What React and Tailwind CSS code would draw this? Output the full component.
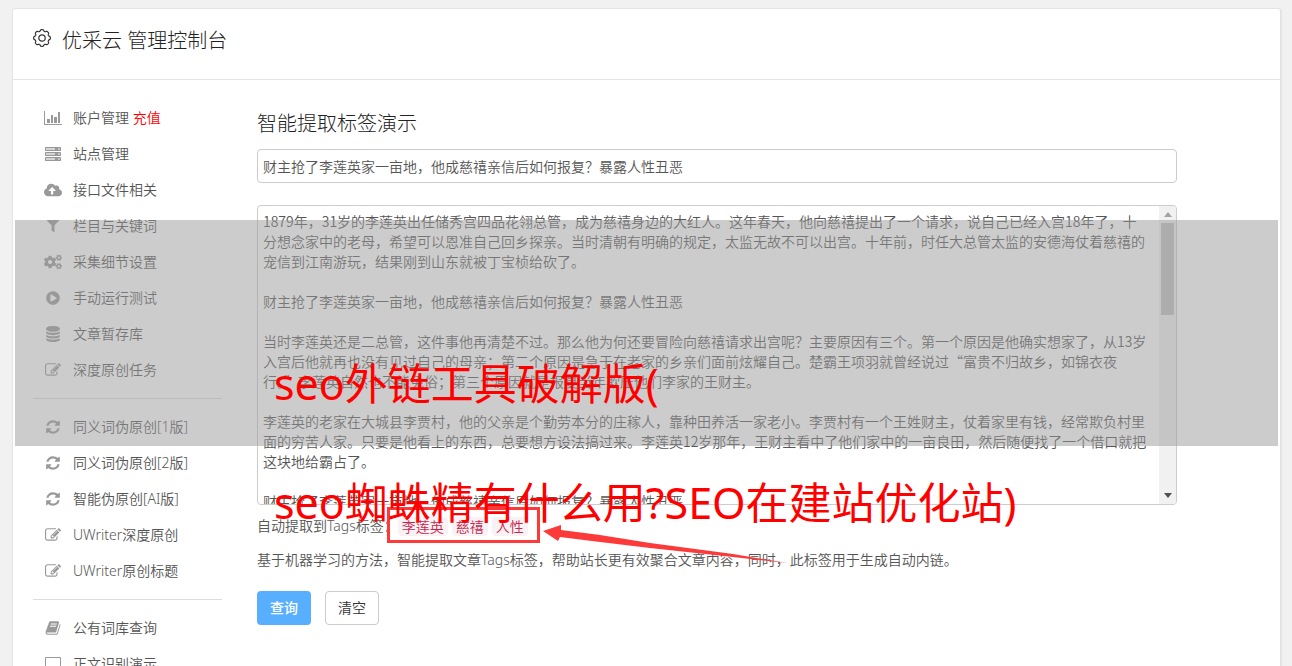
import { FaCloudUploadAlt, FaFilter, FaCogs, FaPlayCircle } from "react-icons/fa";

const Svg = ({ children, box = "0 0 18 16" }) => (
  <svg viewBox={box} className="h-4 w-[18px]" fill="currentColor" aria-hidden="true">{children}</svg>
);

const Bars = () => (
  <Svg>
    <path d="M0 1h1v13h17v1H0z" />
    <path d="M3 9h3v4H3zM7 5h2v8H7zM10 7h3v6h-3zM14 2h2v11h-2z" />
  </Svg>
);
const Server = () => (
  <Svg>
    {[2, 7, 12].map((y) => (
      <g key={y}>
        <rect x="1" y={y - 1} width="16" height="4" rx="0.4" />
        <rect x="2" y={y} width="9" height="2" fill="#d4d4d4" />
        <rect x="14" y={y} width="2" height="2" fill="#c4c4c4" />
      </g>
    ))}
  </Svg>
);
const Cloud = () => <FaCloudUploadAlt className="h-4 w-[18px]" />;
const Filter = () => <FaFilter className="h-3.5 w-3" />;
const Cogs = () => <FaCogs className="h-4 w-[18px]" />;
const Play = () => <FaPlayCircle className="size-3.5" />;
const Db = () => (
  <Svg box="0 0 1536 1792">
    <path d="M768 768q237 0 443-43t325-127v170q0 69-103 128t-280 93.500-385 34.500-385-34.500T103 896 0 768V598q119 84 325 127t443 43zm0 768q237 0 443-43t325-127v170q0 69-103 128t-280 93.500-385 34.500-385-34.500-280-93.500T0 1536v-170q119 84 325 127t443 43zm0-384q237 0 443-43t325-127v170q0 69-103 128t-280 93.500-385 34.500-385-34.500-280-93.500T0 1152V982q119 84 325 127t443 43zM768 0q208 0 385 34.500t280 93.500 103 128v128q0 69-103 128t-280 93.500T768 640t-385-34.500T103 512 0 384V256q0-69 103-128t280-93.500T768 0z" />
  </Svg>
);
const Edit = () => (
  <Svg box="0 0 1792 1792">
    <path d="M888 1184l116-116-152-152-116 116v56h96v96h56zm440-720q-16-16-33 1L945 815q-17 17-1 33t33-1l350-350q17-17 1-33zm80 594v190q0 119-84.500 203.500T1120 1536H288q-119 0-203.500-84.500T0 1248V416q0-119 84.500-203.500T288 128h832q63 0 117 25 15 7 18 23 3 17-9 29l-49 49q-14 14-32 8-23-6-45-6H288q-66 0-113 47t-47 113v832q0 66 47 113t113 47h832q66 0 113-47t47-113v-126q0-13 9-22l64-64q15-15 35-7t20 29zm-96-738l288 288-672 672H640V992zm444 132l-92 92-288-288 92-92q28-28 68-28t68 28l152 152q28 28 28 68t-28 68z" />
  </Svg>
);
const Refresh = () => (
  <Svg box="0 0 1536 1792">
    <path d="M1511 1056q0 5-1 7-64 268-268 434.500T764 1664q-146 0-282.500-55T238 1452l-129 129q-19 19-45 19t-45-19-19-45v-448q0-26 19-45t45-19h448q26 0 45 19t19 45-19 45l-137 137q71 66 161 102t187 36q134 0 250-65t186-179q11-17 53-117 8-23 30-23h192q13 0 22.500 9.500t9.500 22.500zm25-800v448q0 26-19 45t-45 19h-448q-26 0-45-19t-19-45 19-45l138-138Q969 384 768 384q-134 0-250 65T332 628q-11 17-53 117-8 23-30 23H50q-13 0-22.500-9.500T18 736v-7q65-268 270-434.500T768 128q146 0 284 55.500T1297 340l130-129q19-19 45-19t45 19 19 45z" />
  </Svg>
);
const Book = () => (
  <Svg box="0 0 1664 1792">
    <path d="M1639 478q40 57 18 129l-275 906q-19 64-76.500 107.500T1183 1664H260q-77 0-148.500-53.500T12 1479q-24-67-2-127 0-4 3-27t4-37q1-8-3-21.500t-3-19.500q2-11 8-21t16.500-23.500T52 1179q23-38 45-91.500t30-91.500q3-10 .5-30t-.5-28q3-11 17-28t17-23q21-36 42-92t25-90q1-9-2.500-32t.5-28q4-13 22-30.500t22-22.500q19-26 42.500-84.500T340 411q1-8-3-25.500t-2-26.500q2-8 9-18t18-23 17-21q8-12 16.500-30.500t15-35 16-36 19.500-32 26.500-23.500 36-11.500T556 133l-1 3q38-9 51-9h761q74 0 114 56t18 130l-274 906q-36 119-71.500 153.500T1025 1407H156q-27 0-38 15-11 16-1 43 24 70 144 70h923q29 0 56-15.500t35-41.500l300-987q7-22 5-57 38 15 59 43zM575 480q-4 13 2 22.500t20 9.500h608q13 0 25.500-9.500T1247 480l21-64q4-13-2-22.500t-20-9.500H638q-13 0-25.500 9.500T596 416zm-83 256q-4 13 2 22.500t20 9.500h608q13 0 25.500-9.500T1164 736l21-64q4-13-2-22.500t-20-9.500H555q-13 0-25.500 9.500T513 672z" />
  </Svg>
);
const Laptop = () => (
  <Svg>
    <path fillRule="evenodd" d="M2 1h14q1 0 1 1v9q0 1-1 1H2q-1 0-1-1V2q0-1 1-1zm0 1v9h14V2zM0 13h18v1q-1 1-2 1H2q-1 0-2-1z" />
  </Svg>
);

const groups = [
  [
    [Bars, "账户管理", "充值"],
    [Server, "站点管理"],
    [Cloud, "接口文件相关"],
    [Filter, "栏目与关键词"],
    [Cogs, "采集细节设置"],
    [Play, "手动运行测试"],
    [Db, "文章暂存库"],
    [Edit, "深度原创任务"],
  ],
  [
    [Refresh, "同义词伪原创[1版]"],
    [Refresh, "同义词伪原创[2版]"],
    [Refresh, "智能伪原创[AI版]"],
    [Edit, "UWriter深度原创"],
    [Edit, "UWriter原创标题"],
  ],
  [
    [Book, "公有词库查询"],
    [Laptop, "正文识别演示"],
  ],
];

const headline = "财主抢了李莲英家一亩地，他成慈禧亲信后如何报复？暴露人性丑恶";
const article = `1879年，31岁的李莲英出任储秀宫四品花翎总管，成为慈禧身边的大红人。这年春天，他向慈禧提出了一个请求，说自己已经入宫18年了，十分想念家中的老母，希望可以恩准自己回乡探亲。当时清朝有明确的规定，太监无故不可以出宫。十年前，时任大总管太监的安德海仗着慈禧的宠信到江南游玩，结果刚到山东就被丁宝桢给砍了。

${headline}

当时李莲英还是二总管，这件事他再清楚不过。那么他为何还要冒险向慈禧请求出宫呢？主要原因有三个。第一个原因是他确实想家了，从13岁入宫后他就再也没有见过自己的母亲；第二个原因是急于在老家的乡亲们面前炫耀自己。楚霸王项羽就曾经说过“富贵不归故乡，如锦衣夜行。”李莲英自然也不能免俗；第三个原因就是报复当年欺压他们李家的王财主。

李莲英的老家在大城县李贾村，他的父亲是个勤劳本分的庄稼人，靠种田养活一家老小。李贾村有一个王姓财主，仗着家里有钱，经常欺负村里面的穷苦人家。只要是他看上的东西，总要想方设法搞过来。李莲英12岁那年，王财主看中了他们家中的一亩良田，然后随便找了一个借口就把这块地给霸占了。

${headline}`;

function Sidebar() {
  return (
    <nav className="w-[189px] shrink-0 pt-5" aria-label="管理菜单">
      {groups.map((items, i) => (
        <ul key={i} className={i ? "mt-2.5 border-t border-[#ddd] pt-2.5" : ""}>
          {items.map(([Icon, label, extra]) => (
            <li key={label}>
              <a href="#" className="flex h-9 items-center gap-[11px] pl-2.5 text-sm text-[#555]">
                <span className="flex w-[19px] justify-center text-[#999]"><Icon /></span>
                <span className="whitespace-nowrap">
                  {label}
                  {extra && <span className="text-[#f00]"> {extra}</span>}
                </span>
              </a>
            </li>
          ))}
        </ul>
      ))}
    </nav>
  );
}

// Outline of a wheel with eight soft teeth.
const wheel = Array.from({ length: 120 }, (_, i) => {
  const a = (i / 120) * Math.PI * 2;
  const r = 7.6 + 0.75 * Math.tanh(2 * Math.cos(8 * a) + 0.5);
  return `${(9 + r * Math.sin(a)).toFixed(2)},${(9 - r * Math.cos(a)).toFixed(2)}`;
}).join(" ");

function Gear() {
  return (
    <svg viewBox="0 0 18 18" className="mt-[3px] size-[18px]" fill="none" stroke="#333" strokeWidth="1.2" strokeLinejoin="round" aria-hidden="true">
      <polygon points={wheel} />
      <circle cx="9" cy="9" r="3.200" />
    </svg>
  );
}

export default function App() {
  return (
    <div className="relative h-screen overflow-hidden bg-[#f1f1f1] pt-2 pr-2.5 pl-3 font-['Noto_Sans','Noto_Sans_CJK_SC',sans-serif] font-[350] text-[#555]">
      <div className="min-h-full rounded-t border border-r-2 border-[#e4e4e4] bg-white">
        <header className="flex h-[71px] items-start border-b border-[#e4e4e4] px-5 pt-[17px]">
          <h1 className="flex items-start gap-[11px] text-xl leading-[30px] font-light text-[#222]">
            <Gear />
            优采云 管理控制台
          </h1>
        </header>
        <div className="flex gap-[35px] pl-5">
          <Sidebar />
          <main className="mr-[103px] min-w-0 flex-1 pt-[29px] text-sm">
            <h2 className="text-xl leading-[30px] font-light text-[#222]">智能提取标签演示</h2>
            <form className="mt-2.5" onSubmit={(e) => e.preventDefault()}>
              <input aria-label="标题" defaultValue={headline} className="block h-[34px] w-full rounded border border-[#ccc] px-[5px] outline-none" />
              <div className="mt-[22px] flex h-[300px] overflow-hidden rounded border border-[#ccc]">
                <textarea aria-label="正文" defaultValue={article} className="min-w-0 flex-1 resize-none py-[5px] pr-2.5 pl-[5px] font-['Noto_Sans_CJK_SC',sans-serif] leading-5 outline-none [scrollbar-width:none]" />
                <div className="flex w-[17px] flex-col items-center justify-between bg-[#f1f1f1] py-1.5" aria-hidden="true">
                  <div className="flex flex-col items-center gap-1.5">
                    <svg viewBox="0 0 8 5" className="h-[5px] w-2" fill="#a3a3a3"><path d="M4 0l4 5H0z" /></svg>
                    <div className="h-[92px] w-[13px] bg-[#c1c1c1]" />
                  </div>
                  <svg viewBox="0 0 8 5" className="h-[5px] w-2" fill="#505050"><path d="M0 0h8L4 5z" /></svg>
                </div>
              </div>
              <div className="mt-[11px] flex h-5 items-center">
                <span>自动提取到Tags标签：</span>
                <span className="flex gap-1 text-[#c7254e]">
                  {["李莲英", "慈禧", "人性"].map((t) => (
                    <code key={t} className="rounded bg-[#f9f2f4] px-1 font-['Noto_Sans_CJK_SC',sans-serif] text-sm leading-[19px]">{t}</code>
                  ))}
                </span>
              </div>
              <p className="mt-3.5 leading-5">基于机器学习的方法，智能提取文章Tags标签，帮助站长更有效聚合文章内容，同时，此标签用于生成自动内链。</p>
              <div className="mt-[21px] flex gap-3.5">
                <button className="h-[34px] w-[54px] rounded bg-[#58afff] font-medium text-white">查询</button>
                <button type="reset" className="h-[34px] w-[54px] rounded border border-[#ccc] bg-white text-[#333]">清空</button>
              </div>
            </form>
          </main>
        </div>
      </div>

      <div className="pointer-events-none absolute top-[220px] right-3.5 left-[15px] h-[226px] bg-[#999]/50" />
      <div className="pointer-events-none absolute left-[387px] top-[507px] h-9 w-[153px] border-3 border-[#fc3a3a]" />
      <svg viewBox="0 0 248 44" className="pointer-events-none absolute left-[543px] top-[523px] h-11 w-62" fill="#fc3a3a" aria-hidden="true">
        <path d="M0 8L18 2L18 7L57 12L107 20L190 31L244 40L190 34L107 25L57 19L17 14L15 18Z" />
      </svg>
      <p className="pointer-events-none absolute left-[274px] top-[324px] whitespace-nowrap text-[43px] leading-[119px] font-normal text-[#f00]">
        seo外链工具破解版(<br />seo蜘蛛精有什么用?SEO在建站优化站)
      </p>
    </div>
  );
}
